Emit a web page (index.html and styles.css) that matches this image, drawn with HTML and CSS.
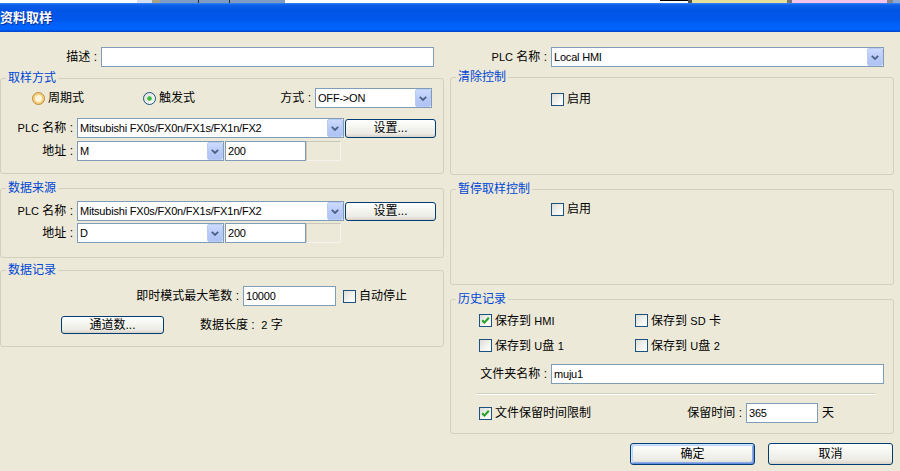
FILE: index.html
```html
<!DOCTYPE html>
<html lang="zh-CN">
<head>
<meta charset="utf-8">
<title>资料取样</title>
<link rel="stylesheet" href="styles.css">
</head>
<body>
<div class="strip">
  <span class="sg-white1"></span><span class="sg-lblue"></span><span class="sg-tan"></span><span class="sg-steel1"></span><span class="sg-dark"></span><span class="sg-steel2"></span><span class="sg-dark"></span><span class="sg-steel3"></span><span class="sg-white2"></span><span class="sg-line"></span><span class="sg-gray1"></span><span class="sg-yellow"></span><span class="sg-gray2"></span><span class="sg-pink"></span><span class="sg-gray3"></span><span class="sg-blue"></span>
</div>
<div class="titlebar"><span class="title">资料取样</span></div>

<div class="content">
  <div class="col">
    <div class="row h20">
      <span class="lbl w-desc">描述 :</span>
      <div class="input w333"></div>
    </div>

    <fieldset class="fs fs-sample">
      <legend>取样方式</legend>
      <div class="fs-body body-sample">
        <div class="row h20">
          <span class="opt w-opt1"><span class="rb hover"></span><span class="t">周期式</span></span>
          <span class="opt w-opt2"><span class="rb on"></span><span class="t">触发式</span></span>
          <span class="lbl w-mode">方式 :</span>
          <div class="select w-mode-sel"><span class="val">OFF-&gt;ON</span><span class="arrow"><svg width="8" height="5" viewBox="0 0 8 5"><path d="M0.8 0.8 L4 4 L7.2 0.8" fill="none" stroke="#4D6185" stroke-width="1.8"/></svg></span></div>
        </div>
        <div class="row h20 mt10">
          <span class="lbl w-plc"><span class="l">PLC</span> 名称 :</span>
          <div class="select w-plc-sel"><span class="val">Mitsubishi FX0s/FX0n/FX1s/FX1n/FX2</span><span class="arrow"><svg width="8" height="5" viewBox="0 0 8 5"><path d="M0.8 0.8 L4 4 L7.2 0.8" fill="none" stroke="#4D6185" stroke-width="1.8"/></svg></span></div>
          <div class="btn w-set">设置...</div>
        </div>
        <div class="row h20 mt3">
          <span class="lbl w-plc">地址 :</span>
          <div class="select w-addr-sel"><span class="val">M</span><span class="arrow"><svg width="8" height="5" viewBox="0 0 8 5"><path d="M0.8 0.8 L4 4 L7.2 0.8" fill="none" stroke="#4D6185" stroke-width="1.8"/></svg></span></div>
          <div class="input w-addr-in"><span class="val">200</span></div>
          <div class="box-dis"></div>
        </div>
      </div>
    </fieldset>

    <fieldset class="fs fs-source">
      <legend>数据来源</legend>
      <div class="fs-body body-source">
        <div class="row h20">
          <span class="lbl w-plc"><span class="l">PLC</span> 名称 :</span>
          <div class="select w-plc-sel"><span class="val">Mitsubishi FX0s/FX0n/FX1s/FX1n/FX2</span><span class="arrow"><svg width="8" height="5" viewBox="0 0 8 5"><path d="M0.8 0.8 L4 4 L7.2 0.8" fill="none" stroke="#4D6185" stroke-width="1.8"/></svg></span></div>
          <div class="btn w-set">设置...</div>
        </div>
        <div class="row h20 mt2">
          <span class="lbl w-plc">地址 :</span>
          <div class="select w-addr-sel"><span class="val">D</span><span class="arrow"><svg width="8" height="5" viewBox="0 0 8 5"><path d="M0.8 0.8 L4 4 L7.2 0.8" fill="none" stroke="#4D6185" stroke-width="1.8"/></svg></span></div>
          <div class="input w-addr-in"><span class="val">200</span></div>
          <div class="box-dis"></div>
        </div>
      </div>
    </fieldset>

    <fieldset class="fs fs-record">
      <legend>数据记录</legend>
      <div class="fs-body body-record">
        <div class="row h20">
          <span class="lbl w-max">即时模式最大笔数 :</span>
          <div class="input w-max-in"><span class="val">10000</span></div>
          <span class="opt ml7"><span class="cb"></span><span class="t">自动停止</span></span>
        </div>
        <div class="row mt10">
          <div class="btn w-chan">通道数...</div>
          <span class="len">数据长度 :  <span class="l">2</span> 字</span>
        </div>
      </div>
    </fieldset>
  </div>

  <div class="col">
    <div class="row h20">
      <span class="lbl w-desc"><span class="l">PLC</span> 名称 :</span>
      <div class="select w333"><span class="val">Local HMI</span><span class="arrow"><svg width="8" height="5" viewBox="0 0 8 5"><path d="M0.8 0.8 L4 4 L7.2 0.8" fill="none" stroke="#4D6185" stroke-width="1.8"/></svg></span></div>
    </div>

    <fieldset class="fs fs-clear">
      <legend>清除控制</legend>
      <div class="fs-body body-clear">
        <span class="opt"><span class="cb"></span><span class="t">启用</span></span>
      </div>
    </fieldset>

    <fieldset class="fs fs-pause">
      <legend>暂停取样控制</legend>
      <div class="fs-body body-pause">
        <span class="opt"><span class="cb"></span><span class="t">启用</span></span>
      </div>
    </fieldset>

    <fieldset class="fs fs-history">
      <legend>历史记录</legend>
      <div class="fs-body body-history">
        <div class="row h13">
          <span class="opt w-h1"><span class="cb"><svg width="11" height="11" viewBox="0 0 11 11"><path d="M2.2 5.2 L4.4 7.6 L8.8 2.8" fill="none" stroke="#21A121" stroke-width="2"/></svg></span><span class="t">保存到 <span class="l">HMI</span></span></span>
          <span class="opt"><span class="cb"></span><span class="t">保存到 <span class="l">SD</span> 卡</span></span>
        </div>
        <div class="row h13 mt12">
          <span class="opt w-h1"><span class="cb"></span><span class="t">保存到 <span class="l">U</span>盘 <span class="l">1</span></span></span>
          <span class="opt"><span class="cb"></span><span class="t">保存到 <span class="l">U</span>盘 <span class="l">2</span></span></span>
        </div>
        <div class="row h20 mt12">
          <span class="lbl w-folder">文件夹名称 :</span>
          <div class="input w333"><span class="val">muju1</span></div>
        </div>
        <div class="sep"></div>
        <div class="row h20 mt8">
          <span class="opt w-keep"><span class="cb"><svg width="11" height="11" viewBox="0 0 11 11"><path d="M2.2 5.2 L4.4 7.6 L8.8 2.8" fill="none" stroke="#21A121" stroke-width="2"/></svg></span><span class="t">文件保留时间限制</span></span>
          <span class="lbl w-keep-lbl">保留时间 :</span>
          <div class="input w-keep-in"><span class="val">365</span></div>
          <span class="day">天</span>
        </div>
      </div>
    </fieldset>

    <div class="actions">
      <div class="btn btn-act default">确定</div>
      <div class="btn btn-act">取消</div>
    </div>
  </div>
</div>
</body>
</html>
```
FILE: styles.css
```css
* { box-sizing: border-box; }
html, body { margin: 0; padding: 0; }
body {
  width: 900px;
  height: 471px;
  overflow: hidden;
  background: #ECE9D8;
  font-family: "Liberation Sans", "Noto Sans CJK SC", sans-serif;
  font-size: 12px;
  line-height: 14px;
  color: #000;
}

/* strip of the window behind */
.strip { display: flex; height: 3px; background: #fff; }
.strip span { flex: none; height: 3px; }
.sg-white1 { width: 137px; background: #fff; }
.sg-lblue { width: 15px; background: #D3E0F4; }
.sg-tan { width: 8px; background: #A9A38C; }
.sg-steel1 { width: 38px; background: #7F9AC3; }
.sg-dark { width: 1px; background: #2A2A2A; }
.sg-steel2 { width: 30px; background: #7F9AC3; }
.sg-steel3 { width: 55px; background: #7F9AC3; }
.sg-white2 { width: 375px; background: #fff; }
.sg-line { width: 28px; background: #fff; border-top: 1px solid #000; }
.sg-gray1 { width: 4px; background: #555; }
.sg-yellow { width: 95px; background: #E4E09C; }
.sg-gray2 { width: 5px; background: #777; }
.sg-pink { width: 95px; background: #F2C4EC; }
.sg-gray3 { width: 6px; background: #888; }
.sg-blue { width: 7px; background: #8CA8D8; }

.titlebar {
  height: 29px;
  background: linear-gradient(to bottom, #3A86F7 0px, #0B5FE8 2px, #0055E5 7px, #0057E9 15px, #0061F9 22px, #0065FF 26px, #0052E2 28px, #0040C4 29px);
  color: #fff;
  font-weight: bold;
  font-size: 13px;
  line-height: 30px;
  white-space: nowrap;
  text-shadow: 1px 1px 0 #0A2A8A;
}
.title { display: inline-block; margin-left: 0; }

.content { display: flex; gap: 6px; padding-top: 15px; }
.col { width: 444px; flex: none; display: flex; flex-direction: column; }

.row { display: flex; align-items: center; }
.h20 { height: 20px; }
.h13 { height: 13px; }
.mt2 { margin-top: 2px; }
.mt3 { margin-top: 3px; }
.mt8 { margin-top: 8px; }
.mt10 { margin-top: 10px; }
.mt12 { margin-top: 12px; }
.ml7 { margin-left: 7px; }

.lbl { flex: none; text-align: right; white-space: pre; padding-right: 4px; }
.l { font-size: 11px; }
.t { white-space: pre; margin-left: 3px; }
.opt { display: flex; align-items: center; flex: none; }

/* group boxes */
.fs {
  margin: 0;
  padding: 0;
  border: 1px solid #D0D0BF;
  border-radius: 3px;
  min-width: 0;
}
.fs legend {
  margin-left: 5px;
  padding: 0 2px;
  color: #0046D5;
  font-size: 12px;
  line-height: 15px;
}

.fs-sample { margin-top: 4px; }
.body-sample { padding: 2px 0 12px 0; }
.body-sample .row:first-child { padding-left: 31px; }
.fs-source { margin-top: 7px; }
.body-source { padding: 5px 0 14px 0; }
.fs-record { margin-top: 5px; }
.body-record { padding: 8px 0 12px 0; }

.fs-clear { margin-top: 3px; }
.body-clear { height: 89px; padding: 7px 0 0 100px; display: flex; align-items: flex-start; }
.fs-pause { margin-top: 7px; }
.body-pause { height: 87px; padding: 5px 0 0 100px; display: flex; align-items: flex-start; }
.fs-history { margin-top: 7px; }
.body-history { padding: 7px 0 10px 28px; }

/* widths */
.w-desc { width: 101px; }
.w333 { width: 333px; }
.w-opt1 { width: 111px; }
.w-opt2 { width: 137px; }
.w-mode { width: 35px; }
.w-mode-sel { width: 117px; }
.w-plc { width: 76px; }
.w-plc-sel { width: 267px; }
.w-set { width: 91px; height: 19px; margin-left: 1px; }
.w-addr-sel { width: 147px; }
.w-addr-in { width: 81px; margin-left: 1px; }
.w-max { width: 242px; }
.w-max-in { width: 93px; }
.w-chan { width: 103px; height: 18px; margin-left: 60px; }
.len { white-space: pre; margin-left: 36px; }
.w-h1 { width: 156px; }
.w-folder { width: 72px; }
.w-keep { width: 207px; }
.w-keep-lbl { width: 60px; }
.w-keep-in { width: 72px; }
.day { margin-left: 4px; }

/* controls */
.input, .select {
  flex: none;
  display: flex;
  align-items: center;
  height: 20px;
  border: 1px solid #7F9DB9;
  background: #fff;
  padding-left: 2px;
}
.val { font-size: 11px; letter-spacing: -0.2px; white-space: nowrap; overflow: hidden; }
.arrow {
  margin-left: auto;
  flex: none;
  width: 16px;
  height: 18px;
  border: 1px solid #BACBF2;
  border-radius: 2px;
  background: linear-gradient(to bottom, #CCDAFE, #B5C8F7 60%, #AFC3F4);
  display: flex;
  align-items: center;
  justify-content: center;
}
.box-dis {
  flex: none;
  width: 35px;
  height: 20px;
  border: 1px solid;
  border-color: #C9C7BA #F4F3EE #F4F3EE #C9C7BA;
  background: #ECE9D8;
}

.btn {
  flex: none;
  display: flex;
  align-items: center;
  justify-content: center;
  border: 1px solid #003C74;
  border-radius: 3px;
  background: linear-gradient(to bottom, #FFFFFF 0%, #F5F5F1 40%, #ECEBE5 80%, #D8D2C6 100%);
  white-space: nowrap;
}
.actions {
  display: flex;
  justify-content: flex-end;
  gap: 13px;
  padding-right: 1px;
  margin-top: 9px;
}
.btn-act { width: 125px; height: 22px; }
.btn.default { box-shadow: inset 1px 1px 0 #CEE7FF, inset -1px -1px 0 #6D8FE0, inset 2px 2px 0 #BCD4F6, inset -2px -2px 0 #89ADE4; }

.cb {
  flex: none;
  width: 13px;
  height: 13px;
  border: 1px solid #1C5180;
  background: linear-gradient(135deg, #DCDCD7 0%, #F4F4F1 60%, #FFFFFF 100%);
  display: flex;
  align-items: center;
  justify-content: center;
}
.rb {
  flex: none;
  width: 13px;
  height: 13px;
  border-radius: 50%;
  border: 1px solid #1C5180;
  background: linear-gradient(135deg, #DCDCD7 0%, #FFFFFF 100%);
}
.rb.hover {
  border-color: #B8893C;
  box-shadow: inset 0 0 0 2px #F9CD72;
  background: #FDF4DE;
}
.rb.on {
  background: radial-gradient(circle at 50% 50%, #2FAE2F 0, #52C952 2px, transparent 2.6px), linear-gradient(135deg, #DCDCD7 0%, #FFFFFF 100%);
}
.sep {
  width: 400px;
  height: 2px;
  margin: 9px 0 0 -3px;
  border-top: 1px solid #D0D0BF;
  border-bottom: 1px solid #FFFFFF;
}
```
